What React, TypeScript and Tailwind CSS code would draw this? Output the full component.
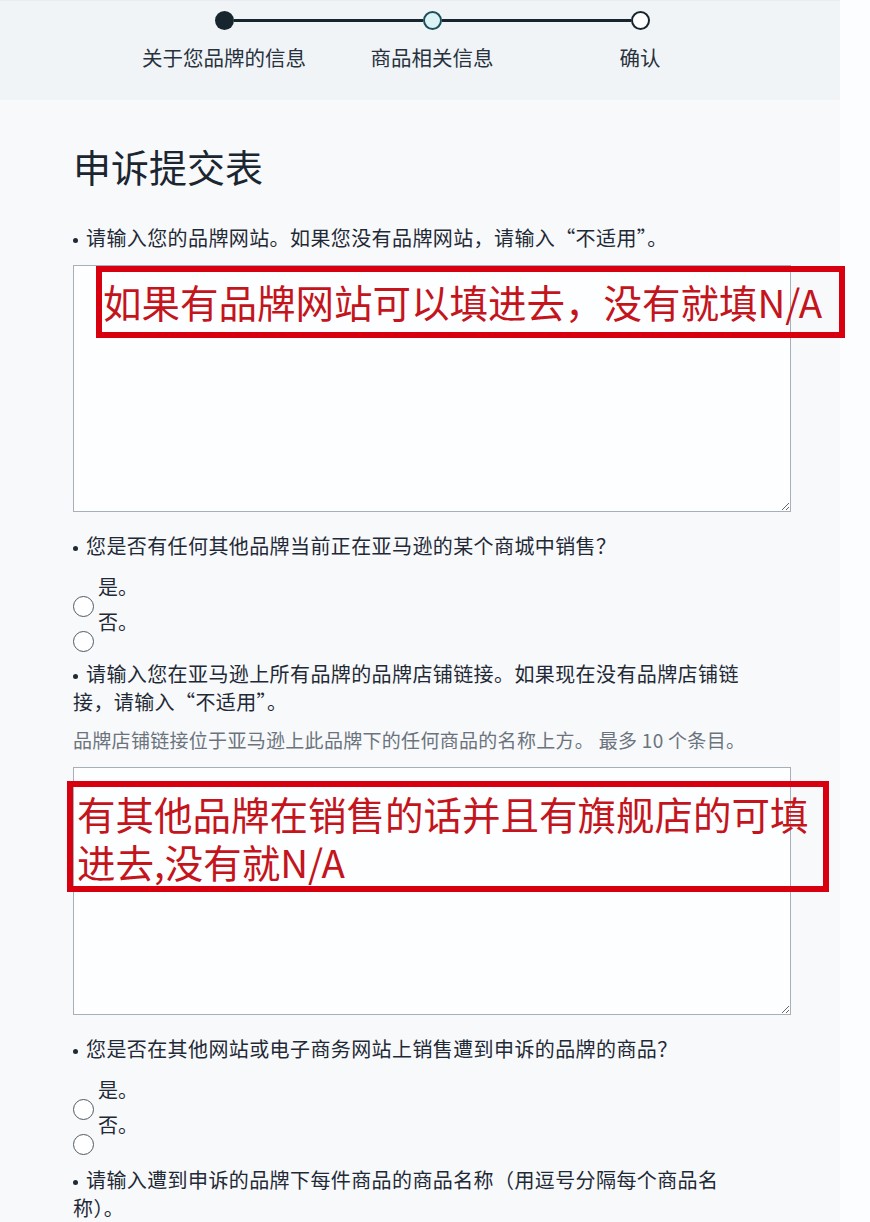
import React from "react";

const steps = [
	{ label: "关于您品牌的信息", state: "done" },
	{ label: "商品相关信息", state: "current" },
	{ label: "确认", state: "todo" },
];

const Step = ({ label, state, index }: { label: string; state: string; index: number }) => {
	const dot =
		state === "done"
			? "bg-[#17262e]"
			: state === "current"
				? "border-[2.5px] border-[#1b4f5a] bg-[#dcf3f6]"
				: "border-[2.5px] border-[#17262e] bg-white";

	return (
		<div className="flex w-[208px] flex-col items-center">
			<div className="flex w-full items-center">
				<div className={index === 0 ? "h-[3px] flex-1" : "h-[3px] flex-1 bg-[#17262e]"} />
				<div className={`size-[19px] shrink-0 rounded-full ${dot}`} />
				<div className={index === 2 ? "h-[3px] flex-1" : "h-[3px] flex-1 bg-[#17262e]"} />
			</div>
			<div className="mt-[13px] text-[20.5px] leading-[28px] text-[#27323e]">{label}</div>
		</div>
	);
};

const Question = ({ children }: { children: React.ReactNode }) => (
	<p className="text-[20px] leading-[28px] tracking-[0.4px] text-[#1f2a36]">
		<span className="mr-[8px] inline-block size-[5px] rounded-full bg-[#1f2a36] align-middle" />
		{children}
	</p>
);

const Radios = () => (
	<div className="mt-[17px] flex flex-col">
		{["是。", "否。"].map((item) => (
			<label key={item} className="flex h-[35px] items-start gap-[4px]">
				<span className="mt-[19px] size-[21px] shrink-0 rounded-full border border-[#4f5963] bg-white" />
				<span className="text-[20px] leading-[20px] text-[#1f2a36]">{item}</span>
			</label>
		))}
	</div>
);

const Note = ({ className, children }: { className: string; children: React.ReactNode }) => (
	<div
		className={`absolute border-[6px] border-[#d8000f] text-[38.5px] leading-[48px] text-[#c4141c] ${className}`}
	>
		{children}
	</div>
);

export default function App() {
	return (
		<div className="min-h-screen w-[870px] bg-[#fcfdfe] font-['Noto_Sans_CJK_SC','Noto_Sans',sans-serif]">
			<div className="w-[840px] bg-[#f8f9fb]">
				<div className="h-[100px] border-t border-[#e9edf1] bg-[#f1f4f7] pt-[10px]">
					<div className="ml-[120px] flex w-[624px]">
						{steps.map((s, i) => (
							<Step key={s.label} label={s.label} state={s.state} index={i} />
						))}
					</div>
				</div>

				<div className="pl-[73px]">
					<h1 className="mt-[43px] text-[38px] leading-[46px] font-normal text-[#1b2631]">申诉提交表</h1>

					<div className="mt-[35px]">
						<Question>请输入您的品牌网站。如果您没有品牌网站，请输入“不适用”。</Question>
					</div>

					<div className="relative mt-[13px] w-[718px]">
						<textarea className="block h-[247px] w-[718px] border border-[#a7afb8] bg-[#fdfeff]" />
						<Note className="top-[1px] left-[23px] h-[72px] w-[749px] pl-[1px] leading-[58px]">
							如果有品牌网站可以填进去，没有就填N/A
						</Note>
					</div>

					<div className="mt-[20px]">
						<Question>您是否有任何其他品牌当前正在亚马逊的某个商城中销售？</Question>
					</div>
					<Radios />

					<div className="mt-[13px] w-[700px]">
						<Question>请输入您在亚马逊上所有品牌的品牌店铺链接。如果现在没有品牌店铺链接，请输入“不适用”。</Question>
					</div>
					<p className="mt-[10px] text-[19px] leading-[28px] tracking-[0.3px] text-[#6b747d]">
						品牌店铺链接位于亚马逊上此品牌下的任何商品的名称上方。 最多 10 个条目。
					</p>

					<div className="relative mt-[13px] w-[718px]">
						<textarea className="block h-[248px] w-[718px] border border-[#a7afb8] bg-[#fdfeff]" />
						<Note className="top-[14px] -left-[6px] h-[111px] w-[762px] pl-[4px] pt-[2px]">
							有其他品牌在销售的话并且有旗舰店的可填
							<br />
							进去,没有就N/A
						</Note>
					</div>

					<div className="mt-[20px]">
						<Question>您是否在其他网站或电子商务网站上销售遭到申诉的品牌的商品？</Question>
					</div>
					<Radios />

					<div className="mt-[16px] w-[680px]">
						<Question>请输入遭到申诉的品牌下每件商品的商品名称（用逗号分隔每个商品名称）。</Question>
					</div>
				</div>
			</div>
		</div>
	);
}
